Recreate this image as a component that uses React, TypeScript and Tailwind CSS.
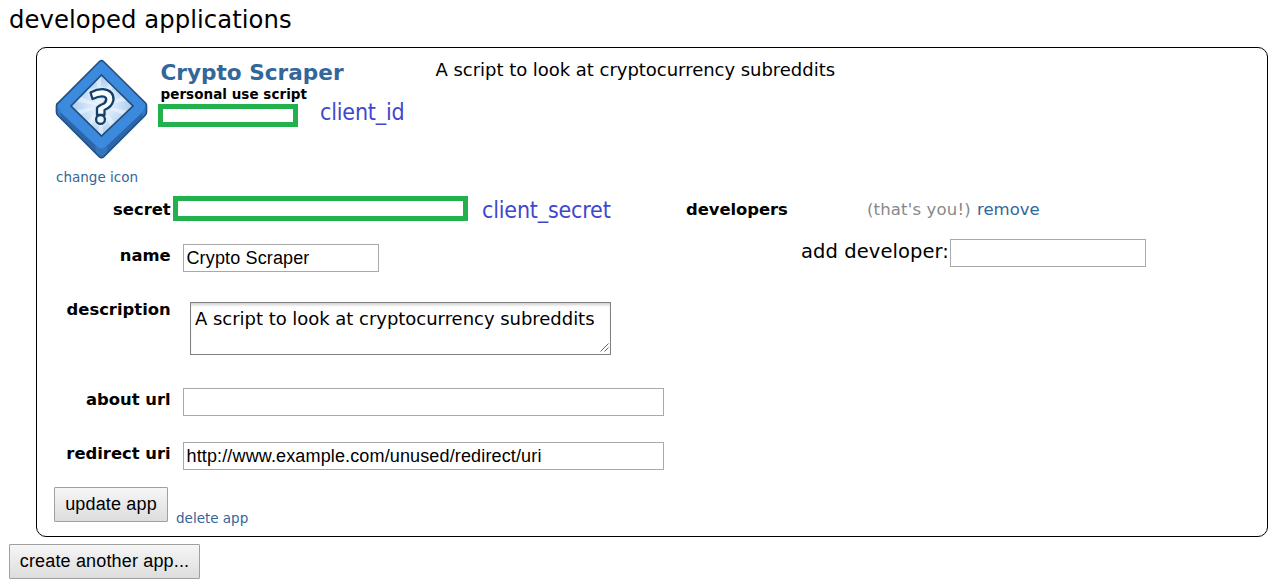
import React from "react";

const sans = "font-['DejaVu_Sans',Verdana,sans-serif]";
const arial = "font-['Liberation_Sans',Arial,sans-serif]";
const inputBase = `${arial} block h-7 rounded-none border border-[#a9a9a9] bg-white pl-[2.500px] pr-1 text-[18px] leading-6 tracking-[0.14px] text-black outline-none`;
const buttonBase = `${arial} block h-[35px] rounded-[1px] border border-[#a0a0a0] bg-linear-to-b from-[#f6f6f6] to-[#dddddd] text-center text-[18px] tracking-[0.16px] text-black whitespace-nowrap`;
const hook = "M40.500 37.500Q47 34 53 34.200Q64 35.500 63.500 45Q62 52 54.500 55V60H47V53Q48 51 54 48.500Q57 46 56 43Q53 39.500 42.500 44Z";

function AppIcon() {
  return (
    <svg width="104" height="108" viewBox="0 0 104 108" className="block" aria-hidden="true">
      <defs>
        <radialGradient id="glow" cx="0.5" cy="0.5" r="0.5">
          <stop offset="0" stopColor="#f2f8fe" />
          <stop offset="0.5" stopColor="#cfe3f8" />
          <stop offset="1" stopColor="#a9cbf2" />
        </radialGradient>
        <clipPath id="face">
          <path d="M51.5 20 83 51 51.5 81 21 51Z" />
        </clipPath>
        <clipPath id="body">
          <path d="M49.500 6.500Q51.500 4.500 53.500 6.500L95.500 48Q96.500 49 96.500 51V57Q96.500 59 95 60.500L54 101.500Q51.500 104 49 101.500L8 60.500Q6.500 59 6.500 57V51Q6.500 49 8 48Z" />
        </clipPath>
      </defs>
      <g clipPath="url(#body)">
        <path d="M0 0H104V108H0Z" fill="#2b66aa" />
        <path d="M51.500 4 97 49.500V53L54 93.500Q51.500 95.500 49 93.500L6 53V49.500Z" fill="#3b8ade" />
        <path d="M6 49 10.500 56V63.500L6 60ZM97 49 92.500 56V63.500L97 60Z" fill="#347cca" />
        <path d="M45 90Q51.500 97 58 90L56.500 100 51.500 104 46.500 100Z" fill="#3474bd" />
      </g>
      <path d="M49.500 6.500Q51.500 4.500 53.500 6.500L95.500 48Q96.500 49 96.500 51V57Q96.500 59 95 60.500L54 101.500Q51.500 104 49 101.500L8 60.500Q6.500 59 6.500 57V51Q6.500 49 8 48Z" fill="none" stroke="#24507f" strokeWidth="1.700" />
      <path d="M51.500 20 83 51 51.500 81 21 51Z" fill="url(#glow)" />
      <g clipPath="url(#face)" fill="#f3f9ff" opacity="0.5">
        <path d="M51 51 44 15h7ZM51 51 62 18l7 5ZM51 51 84 36v8ZM51 51 86 57v8ZM51 51 72 76l-7 6ZM51 51 54 86h-7ZM51 51 36 82l-7-6ZM51 51 17 65v-8ZM51 51 16 45l4-8ZM51 51 28 28l6-5Z" />
      </g>
      <path d="M51.500 20 83 51 51.500 81 21 51Z" fill="none" stroke="#244d78" strokeWidth="1.700" />
      <g strokeLinecap="round" strokeLinejoin="round">
        <path d={hook} fill="#d3ebff" stroke="#d3ebff" strokeWidth="5" />
        <circle cx="50.500" cy="64.500" r="7" fill="#d3ebff" />
        <path d={hook} fill="#f8fcff" stroke="#173f66" strokeWidth="2.300" />
        <circle cx="50.500" cy="64.500" r="4.400" fill="#e8f3fd" stroke="#173f66" strokeWidth="2.300" />
      </g>
    </svg>
  );
}

function Label({ children }: { children: React.ReactNode }) {
  return (
    <label className="mt-[2px] block w-[133.700px] shrink-0 text-right text-[16.400px] leading-5 font-bold whitespace-nowrap">
      {children}
    </label>
  );
}

function Note({ children }: { children: React.ReactNode }) {
  return (
    <span className="block font-['DejaVu_Sans_Condensed','DejaVu_Sans',Tahoma,sans-serif] text-[23px] leading-7 tracking-[-0.180px] whitespace-nowrap text-[#3f48cc] [font-stretch:condensed]">
      {children}
    </span>
  );
}

export default function App() {
  return (
    <main className={`${sans} h-[584px] w-[1280px] overflow-hidden bg-white text-black`}>
      <h1 className="h-[47px] pl-[9px] text-[24.300px] leading-10 font-normal tracking-[0.05px] whitespace-nowrap">developed applications</h1>

      <section className="ml-9 h-[490px] w-[1232px] rounded-[10px] border border-black">
        <header className="flex h-[148px] items-start">
          <div className="w-[121px] shrink-0 pt-[7px] pl-[13px]">
            <AppIcon />
            <a className="mt-[5px] block pl-[6px] text-[13.500px] leading-[18px] whitespace-nowrap text-[#336699]">change icon</a>
          </div>
          <div className="w-[162px] shrink-0 pt-[12px]">
            <h2 className="pl-[2.500px] text-[21.600px] leading-[26px] font-bold whitespace-nowrap text-[#336699]">Crypto Scraper</h2>
            <h3 className="-mt-px pl-[2.500px] text-[13.500px] leading-[18px] font-bold tracking-[0.040px] whitespace-nowrap">personal use script</h3>
            <div className="mt-px h-[23px] w-[140px] border-5 border-[#22b14c]" />
          </div>
          <div className="w-[115.500px] shrink-0 pt-[50px]">
            <Note>client_id</Note>
          </div>
          <p className="pt-[10px] text-[18px] leading-6 tracking-[-0.030px] whitespace-nowrap">A script to look at cryptocurrency subreddits</p>
        </header>

        <div className="flex h-[291px] items-start">
          <form className="w-[649px] shrink-0">
            <div className="flex h-12 items-start">
              <div className="pt-[2px]"><Label>secret</Label></div>
              <div className="ml-[2.300px] h-[25px] w-[295px] border-5 border-[#22b14c]" />
              <div className="ml-[14px]"><Note>client_secret</Note></div>
            </div>
            <div className="flex h-[58px] items-start">
              <Label>name</Label>
              <input className={`${inputBase} ml-[12.300px] w-[196px]`} defaultValue="Crypto Scraper" />
            </div>
            <div className="flex h-[86px] items-start">
              <div className="-mt-1"><Label>description</Label></div>
              <div className="relative ml-[19.300px]">
                <textarea
                  className={`${sans} block h-[53px] w-[421px] resize-none overflow-hidden rounded-none border border-[#808080] bg-white py-[4px] pr-0 pl-1 text-[18px] leading-6 tracking-[-0.030px] whitespace-nowrap shadow-[inset_0_3px_3px_-1px_#d0d0d0] outline-none`}
                  defaultValue="A script to look at cryptocurrency subreddits"
                />
                <svg className="absolute right-[2px] bottom-[3px]" width="9" height="9" viewBox="0 0 9 9" aria-hidden="true">
                  <path d="M0.500 8.500 8.500 0.500M4.500 8.500 8.500 4.500" stroke="#555" strokeWidth="0.900" />
                </svg>
              </div>
            </div>
            <div className="flex h-[54px] items-start">
              <Label>about url</Label>
              <input className={`${inputBase} ml-[12.300px] w-[481px]`} />
            </div>
            <div className="flex h-[45px] items-start">
              <Label>redirect uri</Label>
              <input className={`${inputBase} ml-[12.300px] w-[481px]`} defaultValue="http://www.example.com/unused/redirect/uri" />
            </div>
          </form>

          <aside className="pt-[3px]">
            <div className="flex h-10 items-start">
              <h3 className="w-[181px] pt-px text-[16.400px] leading-5 font-bold tracking-[-0.050px]">developers</h3>
              <span className="w-[110px] pt-px text-[16.500px] leading-5 tracking-[0.160px] whitespace-nowrap text-[#888888]">(that's you!)</span>
              <a className="pt-px text-[16.500px] leading-5 whitespace-nowrap text-[#336699]">remove</a>
            </div>
            <div className="flex items-start pl-[115px]">
              <label className="mt-px w-[149px] text-[19.500px] leading-6 tracking-[0.080px] whitespace-nowrap">add developer:</label>
              <input className={`${inputBase} w-[196px]`} />
            </div>
          </aside>
        </div>

        <footer className="flex items-start pl-[17px]">
          <button className={`${buttonBase} w-[114px]`}>update app</button>
          <a className="mt-[22px] ml-2 text-[13.500px] leading-[18px] whitespace-nowrap text-[#336699]">delete app</a>
        </footer>
      </section>

      <button className={`${buttonBase} mt-[7px] ml-[9px] w-[191px]`}>create another app...</button>
    </main>
  );
}
